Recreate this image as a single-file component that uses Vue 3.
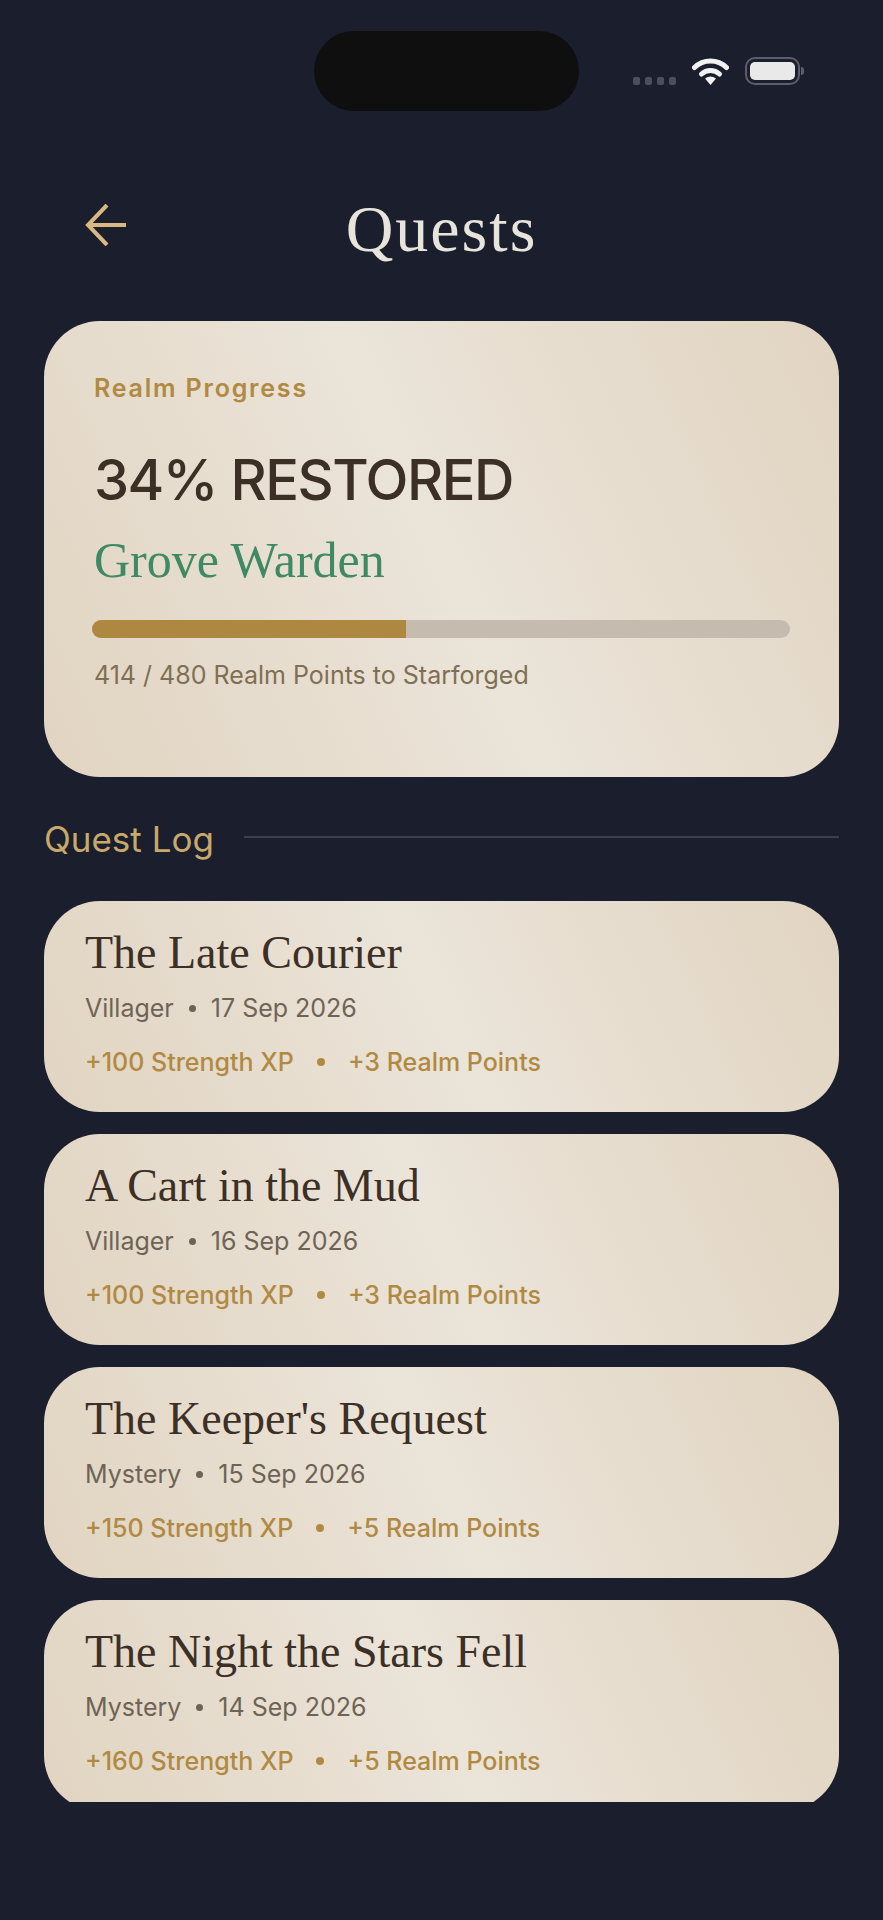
<template>
  <main class="screen">
    <!-- STATUS BAR -->
    <div class="status">
      <div class="island"></div>
      <div class="signal">
        <span v-for="n in 4" :key="n" class="signal__dot"></span>
      </div>
      <svg class="wifi" width="37" height="27" viewBox="0 0 37 27">
        <path d="M2.5 9.5 A23 23 0 0 1 34.5 9.5" fill="none" stroke="#f2f2f2" stroke-width="5" stroke-linecap="round" />
        <path d="M9.5 16 A13 13 0 0 1 27.5 16" fill="none" stroke="#f2f2f2" stroke-width="5" stroke-linecap="round" />
        <path d="M13 20.5 Q18.5 16.5 24 20.5 L18.5 27 Z" fill="#f2f2f2" />
      </svg>
      <div class="battery"><div class="battery__fill"></div></div>
      <div class="battery__nub"></div>
    </div>

    <!-- HEADER -->
    <header class="top">
      <svg class="back" width="42" height="42" viewBox="0 0 42 42">
        <path d="M41 21 H3 M22 1 L3 21 L22 41" fill="none" stroke="#d9b882" stroke-width="4" />
      </svg>
      <h1>Quests</h1>
    </header>

    <!-- PROGRESS -->
    <section class="realm">
      <p class="realm__label">Realm Progress</p>
      <h2>34% RESTORED</h2>
      <p class="realm__rank">Grove Warden</p>
      <div class="bar"><div class="bar__fill" :style="{ width: progress + '%' }"></div></div>
      <p class="realm__note">414 / 480 Realm Points to Starforged</p>
    </section>

    <!-- LOG -->
    <div class="log-title">
      <span>Quest Log</span>
      <i></i>
    </div>

    <section class="log">
      <article v-for="q in quests" :key="q.title" class="quest">
        <h3>{{ q.title }}</h3>
        <p class="quest__meta">
          <span>{{ q.giver }}</span><b></b><span>{{ q.date }}</span>
        </p>
        <p class="quest__reward">
          <span>{{ q.xp }}</span><b></b><span>{{ q.points }}</span>
        </p>
      </article>
    </section>
  </main>
</template>

<script setup>
const progress = 45;

const quests = [
  { title: "The Late Courier", giver: "Villager", date: "17 Sep 2026", xp: "+100 Strength XP", points: "+3 Realm Points" },
  { title: "A Cart in the Mud", giver: "Villager", date: "16 Sep 2026", xp: "+100 Strength XP", points: "+3 Realm Points" },
  { title: "The Keeper's Request", giver: "Mystery", date: "15 Sep 2026", xp: "+150 Strength XP", points: "+5 Realm Points" },
  { title: "The Night the Stars Fell", giver: "Mystery", date: "14 Sep 2026", xp: "+160 Strength XP", points: "+5 Realm Points" }
];
</script>

<style>
html, body {
  margin: 0;
  background: #1a1e2d;
}
</style>

<style scoped>
.screen {
  width: 883px;
  height: 1920px;
  overflow: hidden;
  background: #1a1e2d;
  font-family: Inter, "Liberation Sans", sans-serif;
}

h1, h2, h3, p {
  margin: 0;
  font-weight: 400;
}

/* STATUS BAR */
.status {
  display: flex;
  align-items: flex-end;
  height: 80px;
  padding: 31px 0 0 314px;
}

.island {
  width: 265px;
  height: 80px;
  border-radius: 40px;
  background: #0f0f10;
  margin-right: 54px;
}

.signal {
  display: flex;
  gap: 5px;
  margin-bottom: 26px;
  margin-right: 16px;
}

.signal__dot {
  width: 7px;
  height: 8px;
  border-radius: 2px;
  background: #4b4f5c;
}

.wifi {
  margin-bottom: 26px;
  margin-right: 16px;
}

.battery {
  box-sizing: border-box;
  width: 55px;
  height: 28px;
  padding: 3px;
  border: 2.5px solid #5c5f6b;
  border-radius: 10px;
  margin-bottom: 26px;
}

.battery__fill {
  height: 100%;
  border-radius: 5px;
  background: #e9e9e9;
}

.battery__nub {
  width: 3px;
  height: 8px;
  margin: 0 0 36px 1px;
  border-radius: 0 3px 3px 0;
  background: #5c5f6b;
}

/* HEADER */
.top {
  position: relative;
  display: flex;
  justify-content: center;
  height: 210px;
}

.back {
  position: absolute;
  left: 85px;
  top: 93px;
}

.top h1 {
  margin-top: 78px;
  font-family: "Liberation Serif", serif;
  font-size: 66px;
  line-height: 80px;
  letter-spacing: 2px;
  color: #e8e4dc;
}

/* CARDS */
.realm,
.quest {
  background: linear-gradient(65deg, #e1d4c1 0%, #ebe4d9 50%, #e1d4c1 100%);
}

.realm {
  box-sizing: border-box;
  height: 456px;
  margin: 0 44px;
  padding: 50px 50px 0;
  border-radius: 56px;
}

.realm__label {
  font-size: 25px;
  line-height: 34px;
  font-weight: 600;
  letter-spacing: 1.8px;
  color: #b08a42;
}

.realm h2 {
  margin-top: 41px;
  font-size: 56px;
  line-height: 68px;
  font-weight: 500;
  letter-spacing: -1.5px;
  color: #3b2f26;
}

.realm__rank {
  margin-top: 16px;
  font-family: "Liberation Serif", serif;
  font-size: 50px;
  line-height: 60px;
  color: #3f8a65;
}

.bar {
  height: 18px;
  margin: 30px -1px 0 -2px;
  border-radius: 9px;
  overflow: hidden;
  background: #c6bbaf;
}

.bar__fill {
  height: 100%;
  background: #ae8840;
}

.realm__note {
  margin-top: 20px;
  font-size: 25px;
  line-height: 34px;
  color: #7f6f55;
}

/* LOG */
.log-title {
  display: flex;
  align-items: center;
  gap: 30px;
  height: 124px;
  margin: 0 44px;
  font-size: 35px;
  color: #c8a96a;
}

.log-title i {
  flex: 1;
  height: 2px;
  margin-bottom: 5px;
  background: #3d404a;
}

.log {
  display: flex;
  flex-direction: column;
  gap: 22px;
  height: 901px;
  margin: 0 44px;
  overflow: hidden;
}

.quest {
  flex: none;
  box-sizing: border-box;
  height: 211px;
  padding: 24px 41px 0;
  border-radius: 56px;
}

.quest h3 {
  font-family: "Liberation Serif", serif;
  font-size: 46px;
  line-height: 56px;
  color: #3b2f26;
}

.quest__meta,
.quest__reward {
  display: flex;
  align-items: center;
}

.quest__meta {
  margin-top: 10px;
  font-size: 25px;
  line-height: 34px;
  color: #6e6456;
}

.quest__meta b {
  width: 7px;
  height: 7px;
  margin: 0 15px;
  border-radius: 50%;
  background: #6e6456;
}

.quest__reward {
  margin-top: 20px;
  font-size: 25px;
  line-height: 34px;
  font-weight: 500;
  color: #b08a42;
}

.quest__reward b {
  width: 8px;
  height: 8px;
  margin: 0 23px;
  border-radius: 50%;
  background: #b08a42;
}
</style>
